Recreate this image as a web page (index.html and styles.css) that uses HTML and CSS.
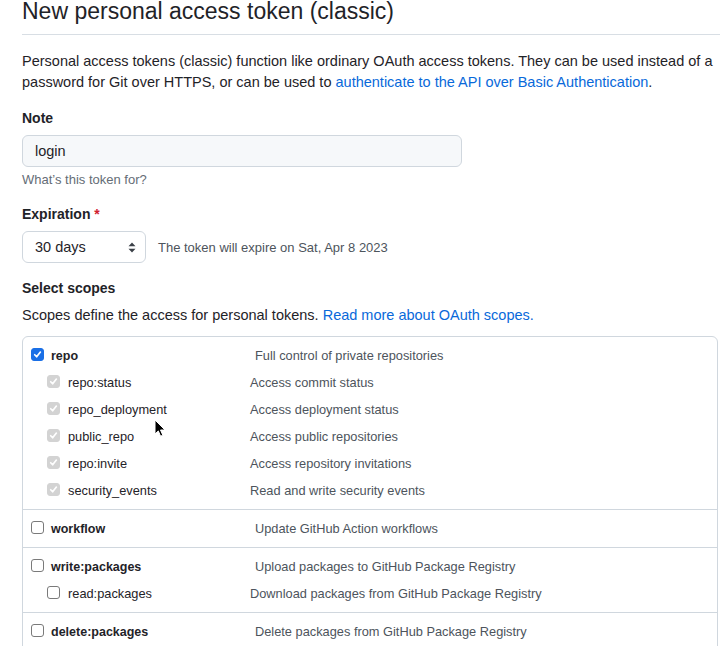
FILE: index.html
```html
<!DOCTYPE html>
<html lang="en">
<head>
<meta charset="utf-8">
<title>New personal access token (classic)</title>
<link rel="stylesheet" href="styles.css">
</head>
<body>
<div class="page">
  <h2 class="subhead">New personal access token (classic)</h2>
  <p class="intro">Personal access tokens (classic) function like ordinary OAuth access tokens. They can be used instead of a password for Git over HTTPS, or can be used to <a class="link" href="#">authenticate to the API over Basic Authentication</a>.</p>

  <div class="field field-first">
    <div class="label">Note</div>
    <div class="input">login</div>
    <p class="hint">What’s this token for?</p>
  </div>

  <div class="field">
    <div class="label">Expiration <span class="req">*</span></div>
    <div class="exp-row">
      <div class="select">
        <span>30 days</span>
        <svg class="select-arrows" width="8" height="11" viewBox="0 0 8 11"><path d="M0.5 4.3 L4 0.6 L7.5 4.3 Z M0.5 6.7 L4 10.4 L7.5 6.7 Z" fill="#3b4048"/></svg>
      </div>
      <span class="exp-note">The token will expire on Sat, Apr 8 2023</span>
    </div>
  </div>

  <div class="field">
    <div class="label">Select scopes</div>
    <p class="scopes-intro">Scopes define the access for personal tokens. <a class="link" href="#">Read more about OAuth scopes.</a></p>

    <div class="scopes">
      <div class="group">
        <div class="row top"><span class="cb checked"><svg width="13" height="13" viewBox="0 0 13 13"><path d="M3.2 6.8 L5.5 9.2 L9.9 3.6" fill="none" stroke="#fff" stroke-width="2" stroke-linecap="round" stroke-linejoin="round"/></svg></span><span class="name">repo</span><span class="desc">Full control of private repositories</span></div>
        <div class="row sub"><span class="cb disabled"><svg width="13" height="13" viewBox="0 0 13 13"><path d="M3.2 6.8 L5.5 9.2 L9.9 3.6" fill="none" stroke="#fff" stroke-width="2" stroke-linecap="round" stroke-linejoin="round"/></svg></span><span class="name">repo:status</span><span class="desc">Access commit status</span></div>
        <div class="row sub"><span class="cb disabled"><svg width="13" height="13" viewBox="0 0 13 13"><path d="M3.2 6.8 L5.5 9.2 L9.9 3.6" fill="none" stroke="#fff" stroke-width="2" stroke-linecap="round" stroke-linejoin="round"/></svg></span><span class="name">repo_deployment</span><span class="desc">Access deployment status</span></div>
        <div class="row sub"><span class="cb disabled"><svg width="13" height="13" viewBox="0 0 13 13"><path d="M3.2 6.8 L5.5 9.2 L9.9 3.6" fill="none" stroke="#fff" stroke-width="2" stroke-linecap="round" stroke-linejoin="round"/></svg></span><span class="name">public_repo</span><span class="desc">Access public repositories</span></div>
        <div class="row sub"><span class="cb disabled"><svg width="13" height="13" viewBox="0 0 13 13"><path d="M3.2 6.8 L5.5 9.2 L9.9 3.6" fill="none" stroke="#fff" stroke-width="2" stroke-linecap="round" stroke-linejoin="round"/></svg></span><span class="name">repo:invite</span><span class="desc">Access repository invitations</span></div>
        <div class="row sub"><span class="cb disabled"><svg width="13" height="13" viewBox="0 0 13 13"><path d="M3.2 6.8 L5.5 9.2 L9.9 3.6" fill="none" stroke="#fff" stroke-width="2" stroke-linecap="round" stroke-linejoin="round"/></svg></span><span class="name">security_events</span><span class="desc">Read and write security events</span></div>
      </div>
      <div class="group">
        <div class="row top"><span class="cb"></span><span class="name">workflow</span><span class="desc">Update GitHub Action workflows</span></div>
      </div>
      <div class="group">
        <div class="row top"><span class="cb"></span><span class="name">write:packages</span><span class="desc">Upload packages to GitHub Package Registry</span></div>
        <div class="row sub"><span class="cb"></span><span class="name">read:packages</span><span class="desc">Download packages from GitHub Package Registry</span></div>
      </div>
      <div class="group">
        <div class="row top"><span class="cb"></span><span class="name">delete:packages</span><span class="desc">Delete packages from GitHub Package Registry</span></div>
      </div>
      <div class="group">
        <div class="row top"><span class="cb"></span><span class="name">admin:org</span><span class="desc">Full control of orgs and teams, read and write org projects</span></div>
      </div>
    </div>
  </div>

  <svg class="cursor" width="12" height="19" viewBox="0 0 12 19"><path d="M1 1 L1 15 L4.3 11.9 L6.6 17.2 L8.8 16.2 L6.5 11 L11 11 Z" fill="#000" stroke="#fff" stroke-width="1" stroke-linejoin="round"/></svg>
</div>
</body>
</html>
```

FILE: styles.css
```css
html, body {
  margin: 0;
  padding: 0;
  overflow: hidden;
  background: #ffffff;
}

body {
  font-family: "Liberation Sans", Arial, sans-serif;
  color: #1f2328;
  font-size: 14px;
}

.page {
  position: relative;
  padding: 0 0 0 22px;
}

.subhead {
  margin: -4px 0 16px 0;
  padding: 0 0 8px 0;
  font-size: 23px;
  line-height: 30px;
  font-weight: 400;
  color: #1f2328;
  border-bottom: 1px solid #d8dee4;
}

.intro {
  margin: 0 0 15px 0;
  font-size: 14.5px;
  line-height: 21px;
  padding-right: 4px;
}

.link {
  color: #0969da;
  text-decoration: none;
}

.field {
  margin-top: 15px;
}

.field-first {
  margin-top: 0;
}

.label {
  font-weight: 700;
  font-size: 14px;
  line-height: 21px;
  margin-bottom: 6px;
}

.req {
  color: #cf222e;
}

.input {
  box-sizing: border-box;
  width: 440px;
  height: 32px;
  background: #f6f8fa;
  border: 1px solid #d0d7de;
  border-radius: 6px;
  padding: 0 12px;
  display: flex;
  align-items: center;
  font-size: 14.5px;
  color: #1f2328;
}

.hint {
  margin: 4px 0 0 0;
  font-size: 13px;
  line-height: 18px;
  color: #656d76;
}

.exp-row {
  display: flex;
  align-items: center;
  gap: 12px;
}

.select {
  box-sizing: border-box;
  width: 124px;
  height: 32px;
  border: 1px solid #d0d7de;
  border-radius: 6px;
  background: #ffffff;
  display: flex;
  align-items: center;
  justify-content: space-between;
  padding: 0 9px 0 12px;
  font-size: 14.5px;
}

.select-arrows {
  display: block;
}

.exp-note {
  font-size: 13px;
  color: #4d545c;
}

.scopes-intro {
  margin: 0 0 10px 0;
  font-size: 14.5px;
  line-height: 21px;
}

.scopes {
  margin-right: 2px;
  border: 1px solid #d0d7de;
  border-radius: 6px;
}

.group {
  padding: 5px 0;
}

.group + .group {
  border-top: 1px solid #d0d7de;
}

.row {
  display: flex;
  align-items: center;
  height: 27px;
  font-size: 12.8px;
}

.row.top {
  padding-left: 8px;
}

.row.sub {
  padding-left: 24px;
}

.cb {
  box-sizing: border-box;
  width: 13px;
  height: 13px;
  flex: 0 0 13px;
  border-radius: 3px;
  border: 1px solid #7a7a7a;
  background: #ffffff;
  display: flex;
  align-items: center;
  justify-content: center;
  margin-top: -2px;
}

.cb svg {
  display: block;
}

.cb.checked {
  background: #1a6fe6;
  border-color: #1a6fe6;
}

.cb.disabled {
  background: #d3d3d3;
  border-color: #d3d3d3;
}

.row.top .cb {
  margin-right: 7px;
}

.row.sub .cb {
  margin-right: 8px;
}

.name {
  color: #1f2328;
}

.row.top .name {
  width: 204px;
  font-weight: 700;
  font-size: 12.5px;
}

.row.sub .name {
  width: 182px;
}

.desc {
  color: #4d545c;
}

.cursor {
  position: absolute;
  left: 154px;
  top: 423px;
}
```
